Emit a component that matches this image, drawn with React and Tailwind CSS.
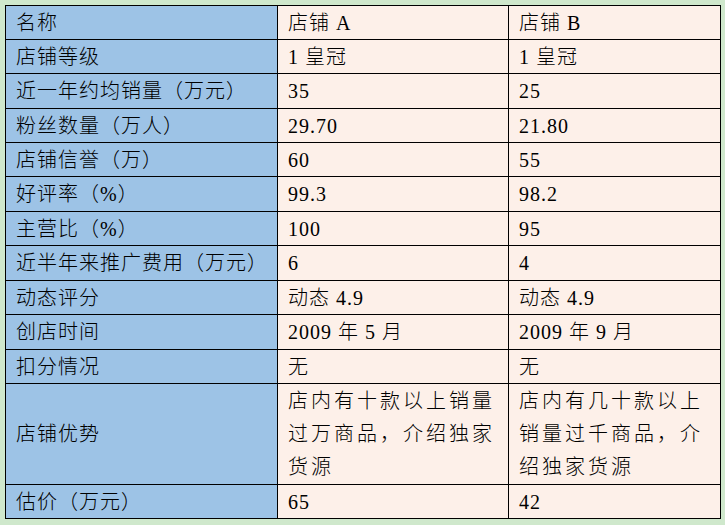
const rows = [
  { h: "h-[34px]", label: "名称", a: "店铺 A", b: "店铺 B" },
  { h: "h-[34px]", label: "店铺等级", a: "1 皇冠", b: "1 皇冠" },
  { h: "h-[35px]", label: "近一年约均销量（万元）", a: "35", b: "25" },
  { h: "h-[34px]", label: "粉丝数量（万人）", a: "29.70", b: "21.80" },
  { h: "h-[34px]", label: "店铺信誉（万）", a: "60", b: "55" },
  { h: "h-[35px]", label: "好评率（%）", a: "99.3", b: "98.2" },
  { h: "h-[34px]", label: "主营比（%）", a: "100", b: "95" },
  { h: "h-[35px]", label: "近半年来推广费用（万元）", a: "6", b: "4" },
  { h: "h-[34px]", label: "动态评分", a: "动态 4.9", b: "动态 4.9" },
  { h: "h-[35px]", label: "创店时间", a: "2009 年 5 月", b: "2009 年 9 月" },
  { h: "h-[34px]", label: "扣分情况", a: "无", b: "无" },
  {
    h: "h-[101px]",
    label: "店铺优势",
    a: ["店内有十款以上销量", "过万商品，介绍独家", "货源"],
    b: ["店内有几十款以上", "销量过千商品，介", "绍独家货源"],
  },
  { h: "h-[34px]", label: "估价（万元）", a: "65", b: "42" },
]

function Cell({ value, className }) {
  const multi = Array.isArray(value)
  return (
    <div className={`flex items-center border-r border-b border-black pl-[10px] ${className}`}>
      {multi ? (
        <div className="leading-[33px] tracking-[3px]">
          {value.map((line) => (
            <div key={line} className="whitespace-nowrap">{line}</div>
          ))}
        </div>
      ) : (
        <span className="whitespace-nowrap tracking-[1px]">{value}</span>
      )}
    </div>
  )
}

export default function App() {
  return (
    <div
      className="w-[725px] h-[525px] bg-[#cfe8cc] pt-[5px] pl-[5px] text-[20px] font-light text-black"
      style={{ fontFamily: '"Liberation Serif", "Noto Sans CJK SC", serif' }}
    >
      <div className="w-[716px] border-l border-t border-black">
        {rows.map((r) => (
          <div key={r.label} className={`grid grid-cols-[272px_231px_212px] ${r.h}`}>
            <Cell value={r.label} className="bg-[#9dc3e6]" />
            <Cell value={r.a} className="bg-[#fdf0e9]" />
            <Cell value={r.b} className="bg-[#fdf0e9]" />
          </div>
        ))}
      </div>
    </div>
  )
}
